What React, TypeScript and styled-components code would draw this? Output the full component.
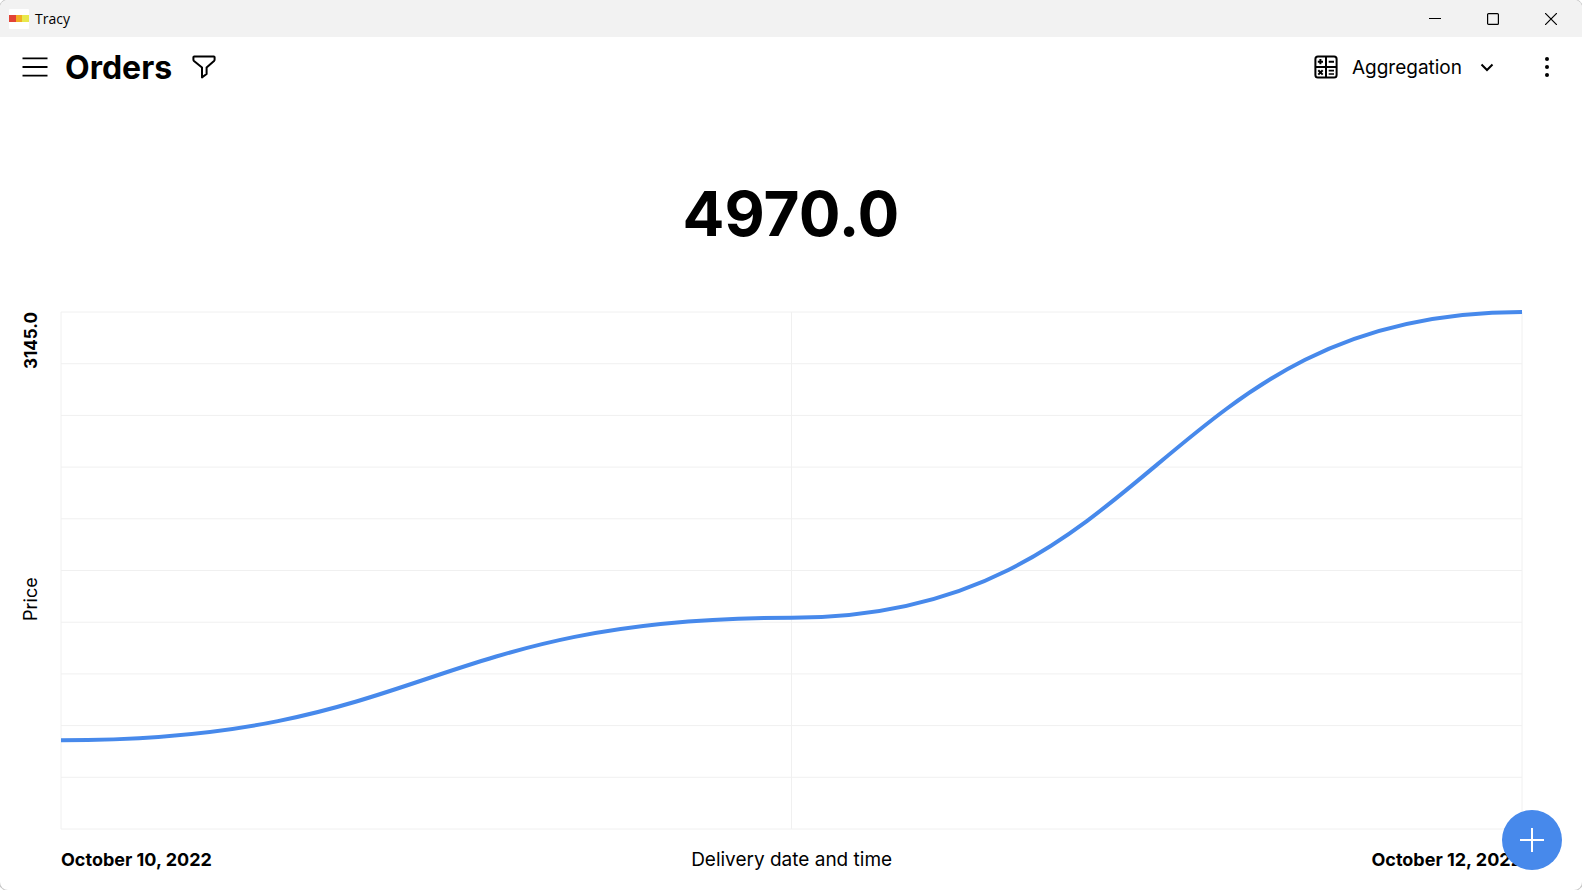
import React from "react";
import styled, { createGlobalStyle } from "styled-components";

const GlobalStyle = createGlobalStyle`
  * { box-sizing: border-box; }
  body { margin: 0; background: #ffffff; color: #000000; font-family: Inter, "Open Sans", sans-serif; }
`;

const Window = styled.div`
  display: flex;
  flex-direction: column;
  min-height: 100vh;
  border-radius: 8px;
  box-shadow: 0 0 0 1px #c8c8c8;
  overflow: hidden;
  background: #ffffff;
`;

const TitleBar = styled.div`
  display: flex;
  align-items: center;
  height: 37px;
  padding: 0 2px 0 9px;
  background: #f2f2f2;
`;

const AppName = styled.span`
  flex: 1;
  margin-left: 6px;
  font: 14px/20px "Open Sans", "Noto Sans", sans-serif;
`;

const PlainButton = styled.button`
  display: flex;
  align-items: center;
  justify-content: center;
  padding: 0;
  border: 0;
  background: none;
  color: inherit;
  cursor: pointer;
`;

const CaptionButton = styled(PlainButton)`
  width: 58px;
  height: 36px;
`;

const Header = styled.header`
  display: flex;
  align-items: center;
  height: 60px;
  padding: 0 15px;
`;

const IconButton = styled(PlainButton)`
  width: 40px;
  height: 40px;
`;

const Title = styled.h1`
  margin: 0 12px 0 10px;
  padding-top: 2px;
  font-size: 32px;
  line-height: 40px;
  font-weight: 700;
`;

const AggregationButton = styled(PlainButton)`
  gap: 14px;
  height: 40px;
  margin-left: auto;
  margin-right: 33px;
  font: 19px/24px Inter, "Open Sans", sans-serif;
`;

const AggregationLabel = styled.span`
  padding-top: 2px;
`;

const Chevron = styled.svg`
  margin-left: 4px;
`;

const Main = styled.main`
  display: flex;
  flex: 1;
  flex-direction: column;
`;

const Total = styled.p`
  margin: 77px 0 58px;
  font-size: 62px;
  line-height: 80px;
  font-weight: 700;
  text-align: center;
`;

const Chart = styled.section`
  display: grid;
  flex: 1;
  grid-template-columns: 61px 1fr;
  grid-template-rows: 1fr 61px;
  padding-right: 60px;
`;

const AxisText = styled.span`
  font-size: 19px;
  line-height: 24px;
  white-space: nowrap;
`;

const AxisValue = styled(AxisText)`
  font-size: 18px;
  font-weight: 700;
`;

const VerticalAxis = styled.div`
  display: flex;
  justify-content: space-between;
  align-items: center;
  writing-mode: vertical-rl;
  transform: rotate(180deg);

  ${AxisText} {
    font-size: 18px;
  }

  ${AxisValue} {
    font-size: 17px;
  }
`;

const HorizontalAxis = styled.div`
  display: flex;
  grid-column: 2;
  align-items: center;
  justify-content: space-between;
`;

const Plot = styled.div`
  position: relative;
  min-height: 200px;
`;

const PlotSvg = styled.svg`
  position: absolute;
  inset: 0;
  width: 100%;
  height: 100%;
  overflow: visible;
`;

const AddButton = styled(PlainButton)`
  position: fixed;
  right: 20px;
  bottom: 20px;
  width: 60px;
  height: 60px;
  border-radius: 50%;
  background: #4789eb;
  color: #ffffff;
`;

const values = [540, 1285, 3145];
const maxValue = 3145;
const rows = 10;

function curvePath() {
  const step = 1000 / (values.length - 1);
  const y = (v: number) => 1000 * (1 - v / maxValue);
  return values
    .map((v, i) => {
      const x = i * step;
      if (i === 0) return `M0 ${y(v)}`;
      const mid = x - step / 2;
      return `C${mid} ${y(values[i - 1])} ${mid} ${y(v)} ${x} ${y(v)}`;
    })
    .join(" ");
}

function LineChart() {
  return (
    <PlotSvg viewBox="0 0 1000 1000" preserveAspectRatio="none" role="img" aria-label="Price by delivery date and time">
      <g stroke="#f0f0f0" fill="none">
        {Array.from({ length: rows + 1 }, (_, i) => (
          <path key={i} d={`M0 ${i * 100}H1000`} vectorEffect="non-scaling-stroke" />
        ))}
        {[0, 500, 1000].map((x) => (
          <path key={x} d={`M${x} 0V1000`} vectorEffect="non-scaling-stroke" />
        ))}
      </g>
      <path d={curvePath()} fill="none" stroke="#4789eb" strokeWidth="4" vectorEffect="non-scaling-stroke" />
    </PlotSvg>
  );
}

export default function App() {
  return (
    <>
      <GlobalStyle />
      <Window>
        <TitleBar>
          <svg width="20" height="20" aria-hidden="true">
            <rect width="20" height="20" rx="1" fill="#fff" />
            <rect y="6" width="7" height="7" fill="#e24337" />
            <rect x="7" y="6" width="6" height="7" fill="#f2ae24" />
            <rect x="13" y="6" width="7" height="7" fill="#e8e84c" />
          </svg>
          <AppName>Tracy</AppName>
          <CaptionButton aria-label="Minimize">
            <svg width="12" height="12" stroke="#000"><path d="M0 5.5H12" /></svg>
          </CaptionButton>
          <CaptionButton aria-label="Maximize">
            <svg width="12" height="12" fill="none" stroke="#000" strokeWidth="1.2"><rect x=".6" y=".6" width="10.8" height="10.8" rx="1" /></svg>
          </CaptionButton>
          <CaptionButton aria-label="Close">
            <svg width="12" height="12" stroke="#000" strokeWidth="1.2"><path d="M0 0L12 12M12 0L0 12" /></svg>
          </CaptionButton>
        </TitleBar>
        <Header>
          <IconButton aria-label="Menu">
            <svg width="26" height="20" stroke="#000" strokeWidth="1.8">
              <path d="M.5 1.4H25.5M.5 10H25.5M.5 18.6H25.5" />
            </svg>
          </IconButton>
          <Title>Orders</Title>
          <IconButton aria-label="Filter">
            <svg width="24" height="24" fill="none" stroke="#000" strokeWidth="2" strokeLinejoin="round">
              <path d="M2.2 1.4H21.8Q22.6 1.4 22.6 2.2V4.4Q22.6 5.4 22 6L14.6 12.6V19L10 22.4V12.6L2 6Q1.4 5.4 1.4 4.4V2.2Q1.4 1.4 2.2 1.4Z" />
            </svg>
          </IconButton>
          <AggregationButton>
            <svg width="24" height="24" fill="none" stroke="#000" strokeWidth="2">
              <rect x="1.4" y="1.4" width="21.2" height="21.2" rx="2.5" />
              <path d="M12 1.4V22.6M1.4 12H22.6M3.8 6.7H9M6.4 4.1V9.3M14.7 6.7H20M4.3 15.2L8.7 19.6M8.7 15.2L4.3 19.6" />
              <path d="M14.7 15.6H20M14.7 19H20" strokeWidth="1.6" />
            </svg>
            <AggregationLabel>Aggregation</AggregationLabel>
            <Chevron width="14" height="24" fill="none" stroke="#000" strokeWidth="2">
              <path d="M1.5 9.5L7 15L12.5 9.5" />
            </Chevron>
          </AggregationButton>
          <IconButton aria-label="More options">
            <svg width="6" height="20">
              <circle cx="3" cy="2" r="2" />
              <circle cx="3" cy="10" r="2" />
              <circle cx="3" cy="18" r="2" />
            </svg>
          </IconButton>
        </Header>
        <Main>
          <Total>4970.0</Total>
          <Chart>
            <VerticalAxis>
              <AxisText />
              <AxisText>Price</AxisText>
              <AxisValue>3145.0</AxisValue>
            </VerticalAxis>
            <Plot>
              <LineChart />
            </Plot>
            <HorizontalAxis>
              <AxisValue>October 10, 2022</AxisValue>
              <AxisText>Delivery date and time</AxisText>
              <AxisValue>October 12, 2022</AxisValue>
            </HorizontalAxis>
          </Chart>
        </Main>
        <AddButton aria-label="Add">
          <svg width="24" height="24" stroke="#fff" strokeWidth="2"><path d="M0 12H24M12 0V24" /></svg>
        </AddButton>
      </Window>
    </>
  );
}
